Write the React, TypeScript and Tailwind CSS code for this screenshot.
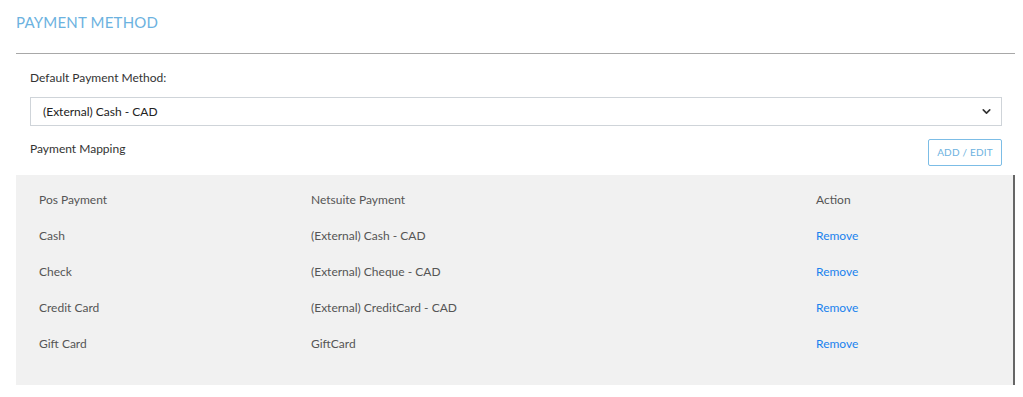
import { ChevronDown } from "lucide-react";

const rows = [
  { pos: "Cash", ns: "(External) Cash - CAD" },
  { pos: "Check", ns: "(External) Cheque - CAD" },
  { pos: "Credit Card", ns: "(External) CreditCard - CAD" },
  { pos: "Gift Card", ns: "GiftCard" },
];

export default function App() {
  return (
    <div className="w-[1023px] h-[397px] bg-white font-['Lato',sans-serif] text-[12px] text-[#333]">
      <div className="pl-4 pr-[8px] pt-[12px]">
        <h2 className="text-[15px] leading-[20px] text-[#6cb2e0] uppercase tracking-[0.2px]">Payment Method</h2>
        <div className="mt-[21px] h-px bg-[#a8a8a8]" />
      </div>

      <div className="pl-[30px] pr-[21px] pt-[16px]">
        <label className="block leading-[16px]">Default Payment Method:</label>
        <div className="mt-[11px] h-[29px] border border-[#cfd4d9] flex items-center justify-between pl-[12px] pr-[8px]">
          <span className="text-[#222]">(External) Cash - CAD</span>
          <ChevronDown size={13} strokeWidth={3} className="text-[#333]" />
        </div>

        <div className="mt-[13px] flex items-start justify-between">
          <span className="mt-[2px] leading-[16px]">Payment Mapping</span>
          <button className="h-[27px] w-[74px] border border-[#7cbde6] rounded-[2px] text-[10px] text-[#6cb2e0] tracking-[0.2px]">
            ADD / EDIT
          </button>
        </div>
      </div>

      <div className="mt-[9px] ml-4 mr-[8px] h-[210px] bg-[#f1f1f1] border-r-2 border-[#666] pt-[17px]">
        <div className="grid grid-cols-[272px_505px_1fr] pl-[23px] text-[#555] leading-[16px] h-[36px]">
          <span>Pos Payment</span>
          <span>Netsuite Payment</span>
          <span>Action</span>
        </div>
        {rows.map((r) => (
          <div key={r.pos} className="grid grid-cols-[272px_505px_1fr] pl-[23px] text-[#555] leading-[16px] h-[36px]">
            <span>{r.pos}</span>
            <span>{r.ns}</span>
            <span className="text-[#1a82ee]">Remove</span>
          </div>
        ))}
      </div>
    </div>
  );
}
